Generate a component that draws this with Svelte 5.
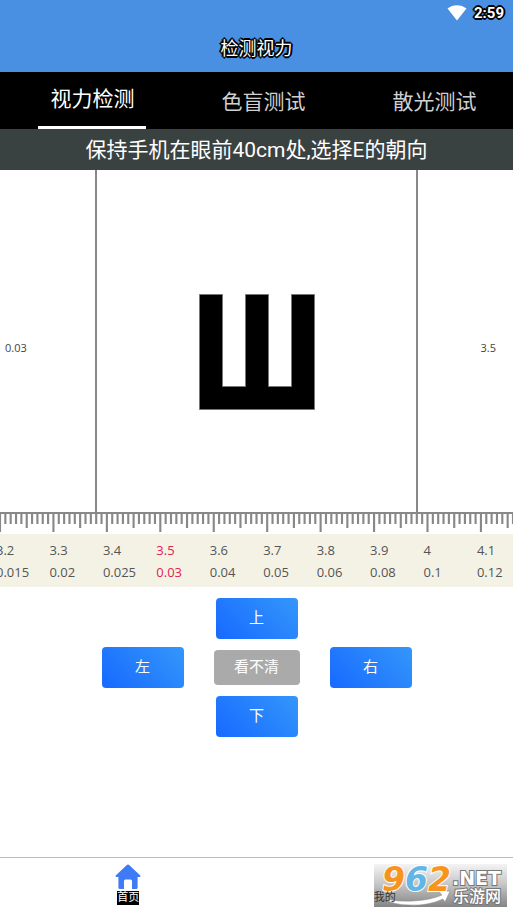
<script>
  const tabs = ["视力检测", "色盲测试", "散光测试"];

  const scale = [
    { five: "3.2", decimal: "0.015" },
    { five: "3.3", decimal: "0.02" },
    { five: "3.4", decimal: "0.025" },
    { five: "3.5", decimal: "0.03" },
    { five: "3.6", decimal: "0.04" },
    { five: "3.7", decimal: "0.05" },
    { five: "3.8", decimal: "0.06" },
    { five: "3.9", decimal: "0.08" },
    { five: "4", decimal: "0.1" },
    { five: "4.1", decimal: "0.12" },
  ];

  // ten ticks for each step of the scale
  const ticks = Array.from({ length: 97 }, (_, i) => ({
    x: i * 10,
    height: i % 10 === 0 ? 18 : i % 5 === 0 ? 14 : 10,
  }));

  let activeTab = $state(0);
  let level = $state(3);
</script>

<div class="page">
  <header>
    <div class="status">
      <svg class="wifi" width="20" height="16" viewBox="0 0 20 16" aria-hidden="true">
        <path d="M10 15.5 0.5 3.6C3.2 1.3 6.5 0.2 10 0.2s6.8 1.1 9.5 3.4Z" fill="#fff" />
      </svg>
      <span class="time">2:59</span>
    </div>
    <h1>检测视力</h1>
  </header>

  <nav class="tabs">
    {#each tabs as tab, i}
      <button class="tab" class:active={i === activeTab} onclick={() => (activeTab = i)}>
        <span>{tab}</span>
      </button>
    {/each}
  </nav>

  <p class="notice">保持手机在眼前40cm处,选择E的朝向</p>

  <section class="chart">
    <span class="side left">{scale[level].decimal}</span>
    <div class="optotype">
      <svg width="116" height="116" viewBox="0 0 116 116" role="img" aria-label="E">
        <path d="M.5.5h23v92h23V.5h23v92h23V.5h23v115H.5Z" stroke="#777" />
      </svg>
    </div>
    <span class="side right">{scale[level].five}</span>
  </section>

  <svg class="ruler" viewBox="0 0 960 20" preserveAspectRatio="none" aria-hidden="true">
    {#each ticks as tick}
      <line x1={tick.x} x2={tick.x} y1="0" y2={tick.height} />
    {/each}
  </svg>

  <ul class="scale">
    {#each scale as step, i}
      <li class:current={i === level}>
        <span>{step.five}</span>
        <span>{step.decimal}</span>
      </li>
    {/each}
  </ul>

  <div class="controls">
    <button class="up">上</button>
    <button class="west">左</button>
    <button class="unclear">看不清</button>
    <button class="east">右</button>
    <button class="down">下</button>
  </div>

  <footer>
    <a class="home" href="#home">
      <svg width="26" height="26" viewBox="0 0 26 26" aria-hidden="true">
        <path
          d="M11.6 1.2q1.4-1.2 2.8 0L25 11.2q1.2 1.5-.6 1.8H22.6v10.500q0 1.500-1.500 1.500H17v-8q0-1.500-1.500-1.500h-5Q9 15.500 9 17v8H4.900q-1.500 0-1.500-1.500V13H1.600Q-.2 12.700 1 11.200Z"
          fill="#407bf6"
        />
      </svg>
      <span>首页</span>
    </a>
    <a class="mine" href="#mine">
      <span>我的</span>
    </a>
    <svg class="badge" width="133" height="43" viewBox="0 0 133 43" role="img" aria-label="962.NET 乐游网">
      <defs>
        <linearGradient id="plate" x1="0" y1="0" x2="0" y2="1">
          <stop offset="0" stop-color="#f4f4f4" />
          <stop offset="0.45" stop-color="#c8c8c8" />
          <stop offset="1" stop-color="#858585" />
        </linearGradient>
      </defs>
      <rect width="133" height="43" fill="url(#plate)" />
      <path
        d="M11 35q14 3 28 2 18-1 29-6l-3-3 11-1-5 11-2-3Q54 42 36 41 19 41 11 35Z"
        fill="#fff"
        stroke="#888"
        stroke-width="0.5"
      />
      <g class="digits">
        <text x="8" y="27" fill="#f7941e">9</text>
        <text x="31" y="27" fill="#62b5e5">6</text>
        <text x="54" y="27" fill="#f7941e">2</text>
      </g>
      <text class="net" x="78" y="21">.NET</text>
      <text class="site" x="79" y="38">乐游网</text>
    </svg>
  </footer>
</div>

<style>
  :global(body) {
    margin: 0;
    background: #fff;
  }

  .page {
    min-height: 100vh;
    display: flex;
    flex-direction: column;
    overflow: hidden;
    font-family: Roboto, "Noto Sans CJK SC", sans-serif;
  }

  button {
    border: 0;
    padding: 0;
    font-family: inherit;
    cursor: pointer;
  }

  header {
    height: 72px;
    background: #4990e2;
    color: #fff;
  }

  .status {
    display: flex;
    justify-content: flex-end;
    align-items: center;
    gap: 7px;
    height: 26px;
    padding-right: 9px;
  }

  .time,
  h1 {
    text-shadow:
      -1px -1px 0 #000,
      1px -1px 0 #000,
      -1px 1px 0 #000,
      1px 1px 0 #000,
      0 -2px 0 #000,
      0 2px 0 #000,
      -2px 0 0 #000,
      2px 0 0 #000;
  }

  .time {
    font-size: 15px;
    font-weight: 700;
  }

  h1 {
    margin: 8px 0 0;
    font-size: 18px;
    font-weight: 400;
    line-height: 30px;
    text-align: center;
  }

  .tabs {
    display: flex;
    height: 57px;
    padding-left: 7px;
    background: #000;
  }

  .tab {
    flex: 0 0 calc((100% + 7px) / 3);
    display: flex;
    justify-content: center;
    background: none;
    color: #d0d0d0;
    font-size: 21px;
    line-height: 60px;
  }

  .tab.active {
    color: #fff;
  }

  .tab.active span {
    padding: 0 12px;
    border-bottom: 3px solid #fff;
    line-height: 54px;
  }

  .notice {
    margin: 0;
    padding-top: 2px;
    background: #3a4241;
    color: #fff;
    font-size: 21px;
    line-height: 39px;
    text-align: center;
  }

  .chart {
    display: grid;
    grid-template-columns: 1fr 63% 1fr;
    align-items: center;
    height: 342px;
    border-bottom: 2px solid #888;
  }

  .optotype {
    display: flex;
    align-items: center;
    justify-content: center;
    height: 100%;
    box-sizing: border-box;
    padding-top: 22px;
    border: solid #888;
    border-width: 0 2px;
  }

  .side {
    padding-top: 12px;
    color: #444;
    font-family: "Open Sans", sans-serif;
    font-size: 11px;
  }

  .left {
    padding-left: 5px;
  }

  .right {
    padding-right: 17px;
    text-align: right;
  }

  .ruler {
    display: block;
    width: 100%;
    height: 20px;
  }

  .ruler line {
    stroke: #888;
    stroke-width: 4;
  }

  .scale {
    display: flex;
    margin: 0;
    padding: 5px 0 4px;
    list-style: none;
    background: #f4f2e5;
    color: #555;
    font-family: "Open Sans", sans-serif;
    font-size: 13px;
    line-height: 22px;
  }

  .scale li {
    flex: 0 0 calc(100% / 9.6);
    display: flex;
    flex-direction: column;
    text-indent: -4px;
  }

  .scale .current {
    color: #e0234e;
  }

  .controls {
    display: grid;
    grid-template-columns: repeat(3, 114px);
    grid-template-areas:
      ". up ."
      "west unclear east"
      ". down .";
    justify-content: center;
    place-items: center;
    row-gap: 8px;
    padding: 11px 0;
  }

  .controls button {
    width: 82px;
    height: 41px;
    border-radius: 4px;
    background: linear-gradient(45deg, #1769ff, #3497fa);
    color: #fff;
    font-size: 15px;
    line-height: 20px;
    padding-bottom: 2px;
  }

  .controls .unclear {
    grid-area: unclear;
    width: 86px;
    height: 35px;
    background: #aaa;
  }

  .up {
    grid-area: up;
  }

  .west {
    grid-area: west;
  }

  .east {
    grid-area: east;
  }

  .down {
    grid-area: down;
  }

  footer {
    position: relative;
    display: flex;
    height: 54px;
    margin-top: auto;
    border-top: 1px solid #bbb;
  }

  footer a {
    flex: 1;
    display: flex;
    flex-direction: column;
    align-items: center;
    gap: 1px;
    padding-top: 6px;
    color: #333;
    font-size: 11px;
    line-height: 14px;
    text-decoration: none;
  }

  .home span {
    background: #000;
    color: #fff;
  }

  /* the label stays readable on top of the badge */
  .mine {
    z-index: 1;
    justify-content: flex-end;
  }

  .mine span {
    padding-bottom: 7px;
  }

  .badge {
    position: absolute;
    top: 6px;
    right: 6px;
    overflow: visible;
  }

  .digits {
    font-family: "DejaVu Sans", sans-serif;
    font-size: 33px;
    font-style: italic;
    font-weight: 700;
    stroke: #fff;
    stroke-width: 2;
    paint-order: stroke;
  }

  .net,
  .site {
    fill: #fff;
    stroke: #777;
    stroke-width: 2;
    paint-order: stroke;
  }

  .net {
    font-family: "DejaVu Sans", sans-serif;
    font-size: 19px;
    font-weight: 700;
  }

  .site {
    font-size: 16px;
    font-weight: 500;
  }
</style>
